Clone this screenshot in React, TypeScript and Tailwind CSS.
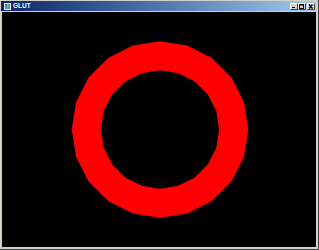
import React from "react";

function ringPath(cx: number, cy: number, ro: number, ri: number, n: number) {
  const pts = (r: number) => {
    const a: string[] = [];
    for (let i = 0; i < n; i++) {
      const t = (i / n) * Math.PI * 2;
      a.push(`${(cx + r * Math.sin(t)).toFixed(2)},${(cy - r * Math.cos(t)).toFixed(2)}`);
    }
    return "M" + a.join("L") + "Z";
  };
  return pts(ro) + pts(ri);
}

function TitleButton({ kind }: { kind: "min" | "max" | "close" }) {
  return (
    <div className="w-[8px] h-[7px] bg-[#d4d0c8] border-t border-l border-t-white border-l-white border-b border-r border-b-[#404040] border-r-[#404040] flex items-center justify-center">
      <svg width="6" height="5" viewBox="0 0 6 5">
        {kind === "min" && <rect x="1" y="3" width="3" height="1" fill="#000" />}
        {kind === "max" && (
          <>
            <rect x="0.5" y="0.5" width="4" height="4" fill="none" stroke="#000" strokeWidth="1" />
            <rect x="0" y="0" width="5" height="1.5" fill="#000" />
          </>
        )}
        {kind === "close" && (
          <path d="M1 0.5 L4.5 4.5 M4.5 0.5 L1 4.5" stroke="#000" strokeWidth="1.2" />
        )}
      </svg>
    </div>
  );
}

export default function App() {
  const cw = 314;
  const ch = 235;
  const d = ringPath(158, 117.5, 88.3, 59.2, 20);
  return (
    <div className="w-[319px] h-[250px] bg-[#d4d0c8] border-r border-b border-r-[#404040] border-b-[#404040] pl-[2px] pt-[1px] flex flex-col overflow-hidden">
      <div
        className="h-[10px] w-[315px] -ml-[1px] flex items-center pl-[3px] pr-[1px] bg-gradient-to-r from-[#0a246a] to-[#a6caf0]"
      >
        <svg width="7" height="7" viewBox="0 0 7 7" className="shrink-0">
          <rect x="0" y="0" width="7" height="7" fill="#e8e8e8" />
          <rect x="1" y="1" width="2.5" height="5" fill="#3c9c9c" />
          <rect x="3.5" y="1" width="2.5" height="5" fill="#7a8fb0" />
        </svg>
        <span
          className="ml-[2px] text-white font-bold text-[6.5px] leading-none"
          style={{ fontFamily: '"Liberation Sans", Arial, sans-serif' }}
        >
          GLUT
        </span>
        <div className="ml-auto flex items-center">
          <TitleButton kind="min" />
          <TitleButton kind="max" />
          <div className="w-[1px]" />
          <TitleButton kind="close" />
        </div>
      </div>
      <div className="h-[1px]" />
      <div className="w-[314px] h-[235px] bg-black">
        <svg width={cw} height={ch} viewBox={`0 0 ${cw} ${ch}`} className="block">
          <path d={d} fill="#ff0000" fillRule="evenodd" />
        </svg>
      </div>
    </div>
  );
}
